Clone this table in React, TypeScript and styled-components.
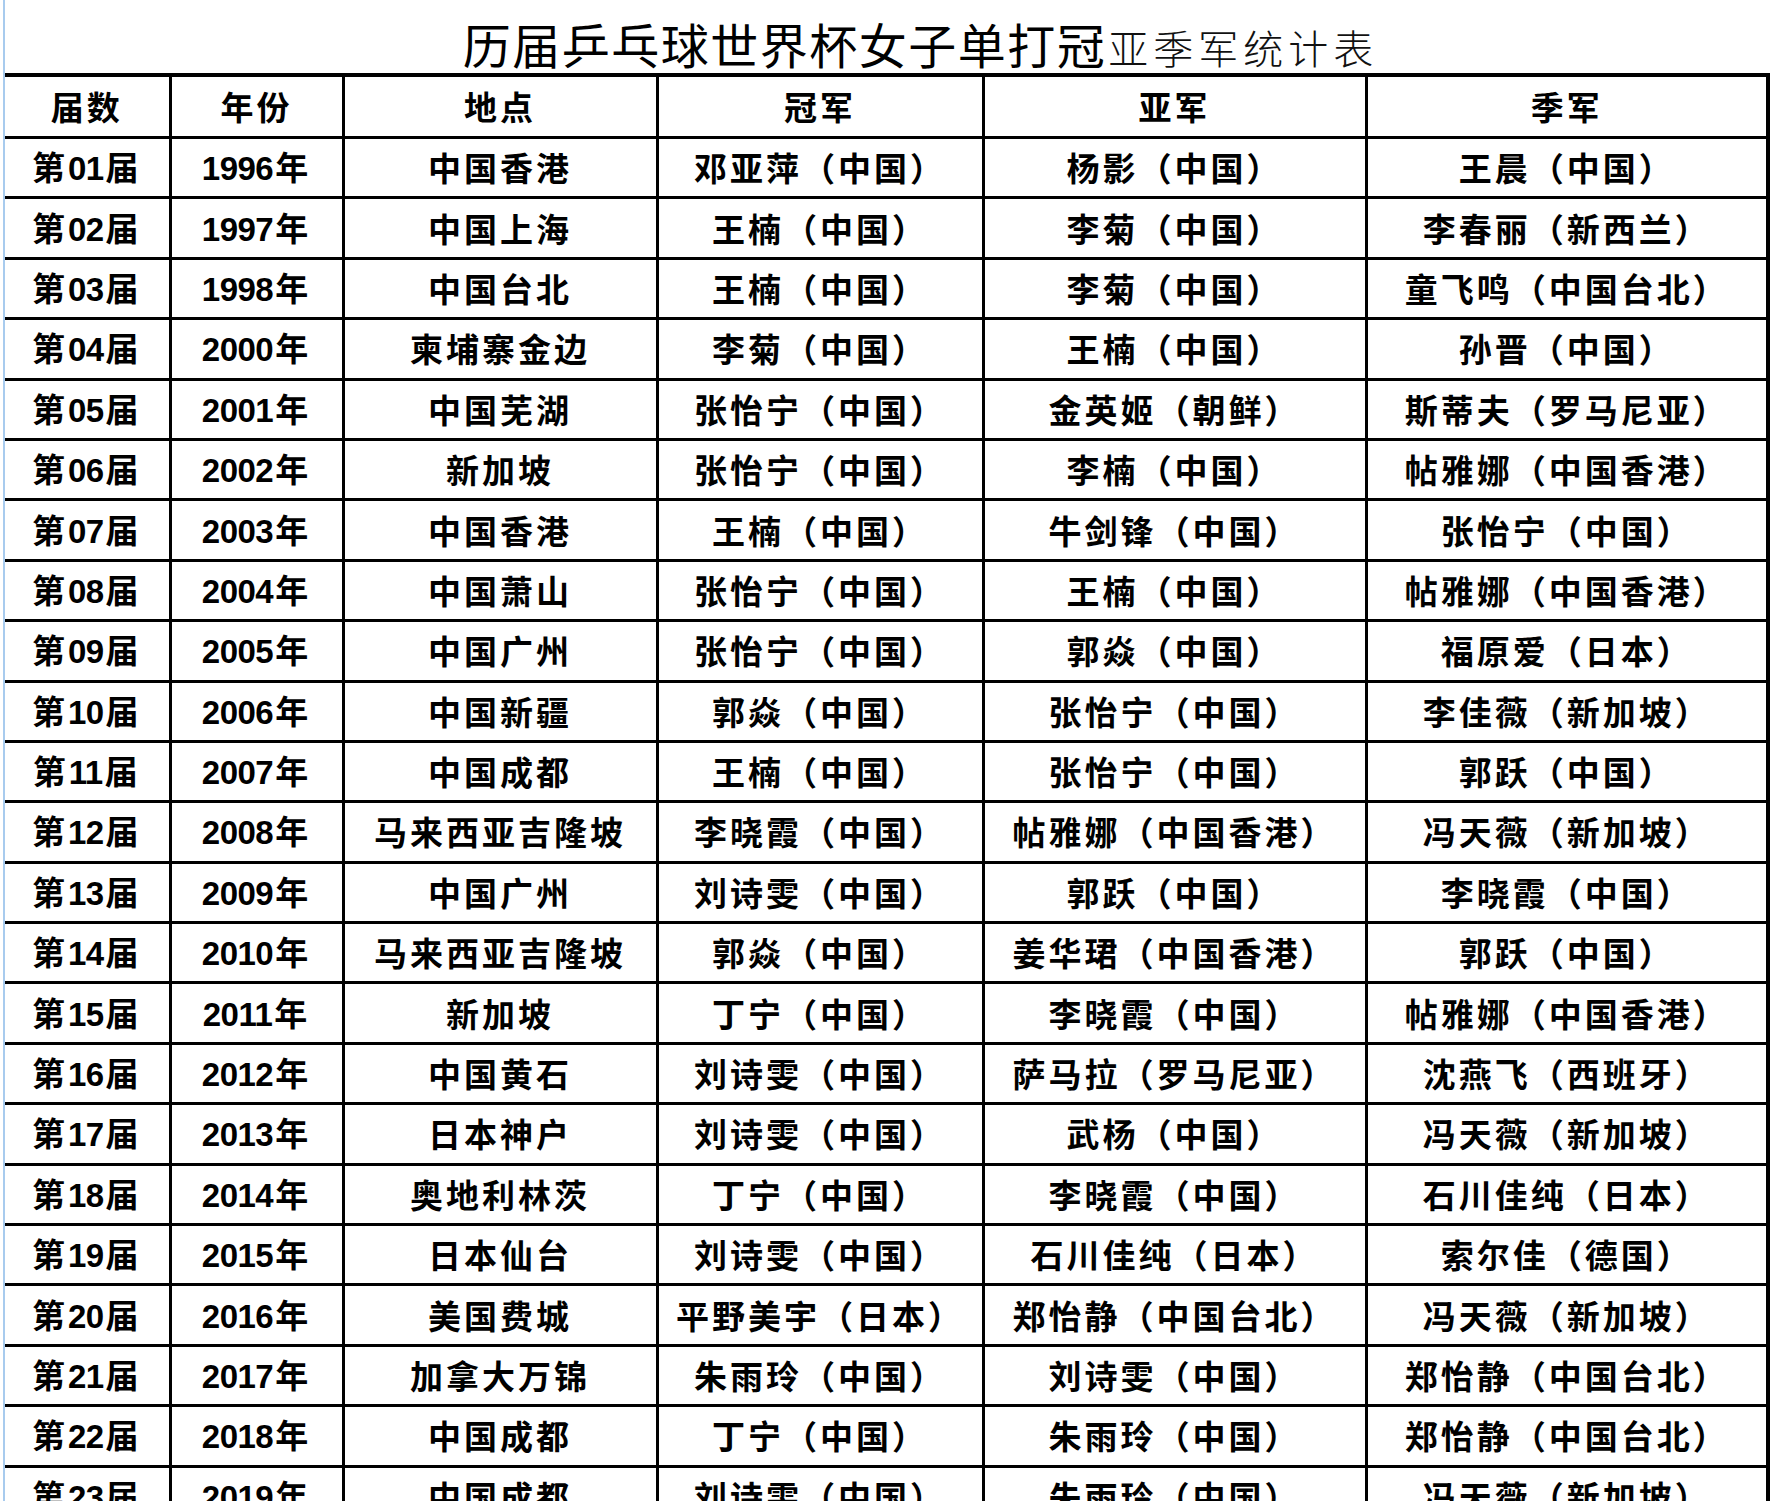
import styled, { createGlobalStyle } from "styled-components"

const GlobalStyle = createGlobalStyle`
    html, body {
        margin: 0;
        padding: 0;
        background: #ffffff;
    }
`

const Sheet = styled.div`
    width: 1772px;
    height: 1501px;
    overflow: hidden;
    box-sizing: border-box;
    padding-left: 3px;
    background: #ffffff;
`

const Frame = styled.div`
    border-left: 2px solid #a8cbee;
    height: 100%;
    box-sizing: border-box;
`

const Title = styled.h1`
    margin: 0;
    height: 73px;
    width: 1763px;
    display: flex;
    align-items: flex-end;
    justify-content: center;
    box-sizing: border-box;
    padding: 0 0 6px 68px;
    font-family: "Noto Sans CJK SC", sans-serif;
    font-weight: 400;
    color: #000000;
    line-height: 1;
`

const TitleMain = styled.span`
    font-size: 48px;
    letter-spacing: 1.5px;
`

const TitleTail = styled.span`
    font-size: 40px;
    font-weight: 300;
    letter-spacing: 5px;
    margin-left: 2px;
    color: #111111;
`

const Table = styled.table`
    border-collapse: collapse;
    table-layout: fixed;
    width: 1763px;
    border-top: 4px solid #000000;
    border-right: 4px solid #000000;
`

const Cell = styled.td<{ $head?: boolean }>`
    border: 3px solid #000000;
    height: ${p => (p.$head ? "59px" : "57.4px")};
    padding: 0;
    text-align: center;
    vertical-align: middle;
    font-family: "Noto Sans CJK SC", sans-serif;
    font-weight: 700;
    font-size: 33px;
    letter-spacing: 3px;
    color: #000000;
    white-space: nowrap;
    line-height: 1;

    &:first-child {
        border-left: none;
    }
`

const Num = styled.span`
    font-family: "Liberation Sans", Arial, sans-serif;
    font-weight: 700;
    letter-spacing: -0.5px;
    margin-right: 2px;
`

const columns = [165, 173, 314, 326, 383, 402]
const headers = ["届数", "年份", "地点", "冠军", "亚军", "季军"]

const rows: string[][] = [
    ["1996", "中国香港", "邓亚萍（中国）", "杨影（中国）", "王晨（中国）"],
    ["1997", "中国上海", "王楠（中国）", "李菊（中国）", "李春丽（新西兰）"],
    ["1998", "中国台北", "王楠（中国）", "李菊（中国）", "童飞鸣（中国台北）"],
    ["2000", "柬埔寨金边", "李菊（中国）", "王楠（中国）", "孙晋（中国）"],
    ["2001", "中国芜湖", "张怡宁（中国）", "金英姬（朝鲜）", "斯蒂夫（罗马尼亚）"],
    ["2002", "新加坡", "张怡宁（中国）", "李楠（中国）", "帖雅娜（中国香港）"],
    ["2003", "中国香港", "王楠（中国）", "牛剑锋（中国）", "张怡宁（中国）"],
    ["2004", "中国萧山", "张怡宁（中国）", "王楠（中国）", "帖雅娜（中国香港）"],
    ["2005", "中国广州", "张怡宁（中国）", "郭焱（中国）", "福原爱（日本）"],
    ["2006", "中国新疆", "郭焱（中国）", "张怡宁（中国）", "李佳薇（新加坡）"],
    ["2007", "中国成都", "王楠（中国）", "张怡宁（中国）", "郭跃（中国）"],
    ["2008", "马来西亚吉隆坡", "李晓霞（中国）", "帖雅娜（中国香港）", "冯天薇（新加坡）"],
    ["2009", "中国广州", "刘诗雯（中国）", "郭跃（中国）", "李晓霞（中国）"],
    ["2010", "马来西亚吉隆坡", "郭焱（中国）", "姜华珺（中国香港）", "郭跃（中国）"],
    ["2011", "新加坡", "丁宁（中国）", "李晓霞（中国）", "帖雅娜（中国香港）"],
    ["2012", "中国黄石", "刘诗雯（中国）", "萨马拉（罗马尼亚）", "沈燕飞（西班牙）"],
    ["2013", "日本神户", "刘诗雯（中国）", "武杨（中国）", "冯天薇（新加坡）"],
    ["2014", "奥地利林茨", "丁宁（中国）", "李晓霞（中国）", "石川佳纯（日本）"],
    ["2015", "日本仙台", "刘诗雯（中国）", "石川佳纯（日本）", "索尔佳（德国）"],
    ["2016", "美国费城", "平野美宇（日本）", "郑怡静（中国台北）", "冯天薇（新加坡）"],
    ["2017", "加拿大万锦", "朱雨玲（中国）", "刘诗雯（中国）", "郑怡静（中国台北）"],
    ["2018", "中国成都", "丁宁（中国）", "朱雨玲（中国）", "郑怡静（中国台北）"],
    ["2019", "中国成都", "刘诗雯（中国）", "朱雨玲（中国）", "冯天薇（新加坡）"],
]

export default function App() {
    return (
        <Sheet>
            <GlobalStyle />
            <Frame>
                <Title>
                    <TitleMain>历届乒乓球世界杯女子单打冠</TitleMain>
                    <TitleTail>亚季军统计表</TitleTail>
                </Title>
                <Table>
                    <colgroup>
                        {columns.map((w, i) => (
                            <col key={i} style={{ width: w }} />
                        ))}
                    </colgroup>
                    <thead>
                        <tr>
                            {headers.map(h => (
                                <Cell as="th" $head key={h}>{h}</Cell>
                            ))}
                        </tr>
                    </thead>
                    <tbody>
                        {rows.map((r, i) => {
                            const n = String(i + 1).padStart(2, "0")
                            return (
                                <tr key={n}>
                                    <Cell>第<Num>{n}</Num>届</Cell>
                                    <Cell><Num>{r[0]}</Num>年</Cell>
                                    <Cell>{r[1]}</Cell>
                                    <Cell>{r[2]}</Cell>
                                    <Cell>{r[3]}</Cell>
                                    <Cell>{r[4]}</Cell>
                                </tr>
                            )
                        })}
                    </tbody>
                </Table>
            </Frame>
        </Sheet>
    )
}
